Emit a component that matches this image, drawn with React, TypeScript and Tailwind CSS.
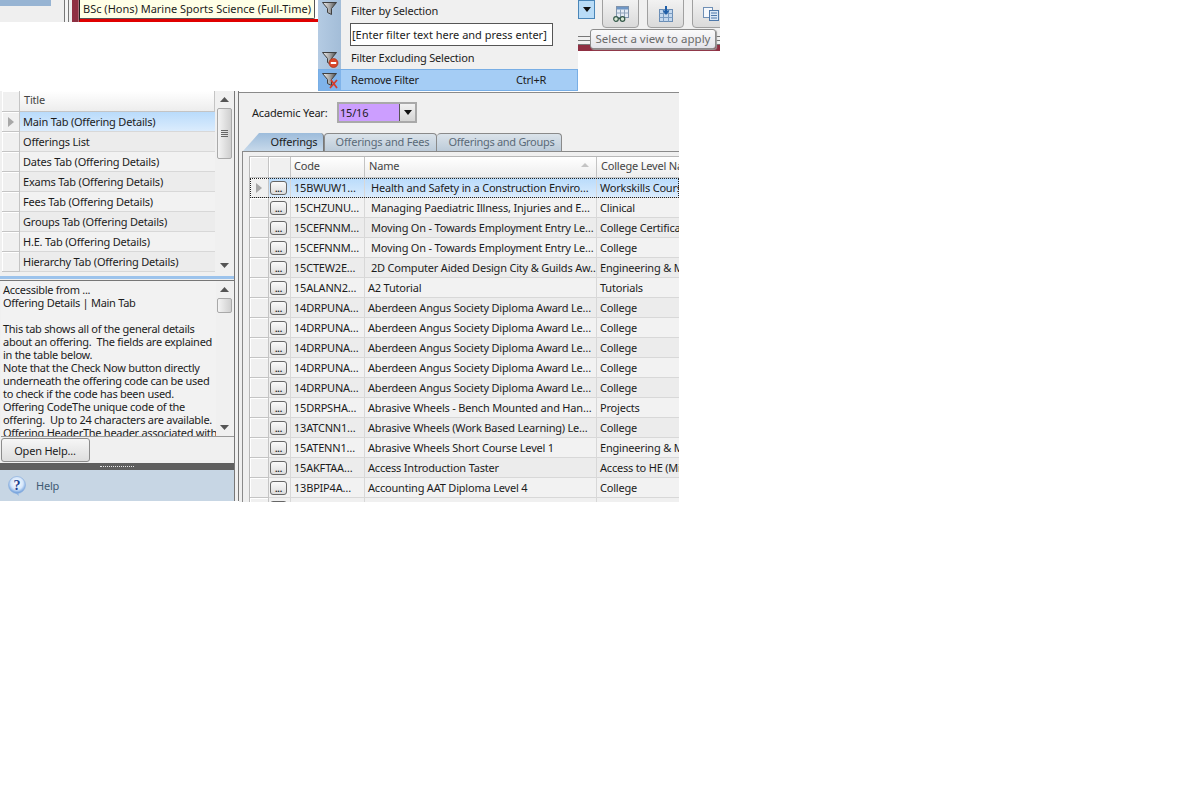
const listRows = [
  'Main Tab (Offering Details)',
  'Offerings List',
  'Dates Tab (Offering Details)',
  'Exams Tab (Offering Details)',
  'Fees Tab (Offering Details)',
  'Groups Tab (Offering Details)',
  'H.E. Tab (Offering Details)',
  'Hierarchy Tab (Offering Details)',
];

const helpLines = [
  'Accessible from ...',
  'Offering Details | Main Tab',
  '\u00a0',
  'This tab shows all of the general details',
  'about an offering.\u00a0 The fields are explained',
  'in the table below.',
  'Note that the Check Now button directly',
  'underneath the offering code can be used',
  'to check if the code has been used.',
  'Offering CodeThe unique code of the',
  'offering.\u00a0 Up to 24 characters are available.',
  'Offering HeaderThe header associated with',
];

const gridRows = [
  ['15BWUW1…', 'Health and Safety in a Construction Enviro…', 'Workskills Course'],
  ['15CHZUNU…', 'Managing Paediatric Illness, Injuries and E…', 'Clinical'],
  ['15CEFNNM…', 'Moving On - Towards Employment Entry Le…', 'College Certificate'],
  ['15CEFNNM…', 'Moving On - Towards Employment Entry Le…', 'College'],
  ['15CTEW2E…', '2D Computer Aided Design City & Guilds Aw…', 'Engineering & Manufacturing'],
  ['15ALANN2…', 'A2 Tutorial', 'Tutorials'],
  ['14DRPUNA…', 'Aberdeen Angus Society Diploma Award Le…', 'College'],
  ['14DRPUNA…', 'Aberdeen Angus Society Diploma Award Le…', 'College'],
  ['14DRPUNA…', 'Aberdeen Angus Society Diploma Award Le…', 'College'],
  ['14DRPUNA…', 'Aberdeen Angus Society Diploma Award Le…', 'College'],
  ['14DRPUNA…', 'Aberdeen Angus Society Diploma Award Le…', 'College'],
  ['15DRPSHA…', 'Abrasive Wheels - Bench Mounted and Han…', 'Projects'],
  ['13ATCNN1…', 'Abrasive Wheels (Work Based Learning) Le…', 'College'],
  ['15ATENN1…', 'Abrasive Wheels Short Course Level 1', 'Engineering & Manufacturing'],
  ['15AKFTAA…', 'Access Introduction Taster', 'Access to HE (Mixed)'],
  ['13BPIP4A…', 'Accounting  AAT Diploma Level 4', 'College'],
];

function Funnel({ id, mark }: { id: string; mark?: 'minus' | 'cross' }) {
  return (
    <svg width="18" height="18" viewBox="0 0 18 18">
      <defs>
        <linearGradient id={id} x1="0" y1="0" x2="1" y2="0">
          <stop offset="0" stopColor="#f4f4f4" />
          <stop offset="0.55" stopColor="#a0a0a0" />
          <stop offset="1" stopColor="#444444" />
        </linearGradient>
      </defs>
      <path d="M1.5 2.5h14l-5 6v6l-4-2v-4z" fill={`url(#${id})`} stroke="#3f3f3f" strokeWidth="1" />
      {mark === 'minus' && (
        <>
          <circle cx="12.5" cy="13" r="4.5" fill="#d9472a" stroke="#a83214" strokeWidth="0.7" />
          <rect x="9.8" y="12" width="5.4" height="2" fill="#ffffff" />
        </>
      )}
      {mark === 'cross' && <path d="M9 17l7-8M10 9l6 8" stroke="#d63a2a" strokeWidth="1.7" fill="none" />}
    </svg>
  );
}

function ToolButton({ children }: { children: React.ReactNode }) {
  return (
    <div className="w-[37px] h-[29px] -mt-px shrink-0 flex items-center justify-center rounded-b-[4px] border border-[#a0a0a0] bg-gradient-to-b from-[#f2f2f2] to-[#dadada]">
      {children}
    </div>
  );
}

function ScrollArrow({ up }: { up?: boolean }) {
  return (
    <div className="h-[17px] flex items-center justify-center">
      <svg width="9" height="5" viewBox="0 0 9 5">
        <path d={up ? 'M4.5 0L9 5H0z' : 'M4.5 5L0 0h9z'} fill="#555555" />
      </svg>
    </div>
  );
}

function ScrollBar({ thumbHeight, grip }: { thumbHeight: string; grip?: boolean }) {
  return (
    <div className="w-[17px] h-full flex flex-col bg-[#f0f0f0]">
      <ScrollArrow up />
      <div className="flex-1 min-h-0">
        <div className={`${thumbHeight} mx-px border border-[#a9a9a9] rounded-[2px] bg-gradient-to-r from-[#f4f4f4] to-[#cfcfcf] flex flex-col items-center justify-center gap-px`}>
          {grip && (
            <>
              <div className="w-[7px] h-px bg-[#666666]" />
              <div className="w-[7px] h-px bg-[#666666]" />
              <div className="w-[7px] h-px bg-[#666666]" />
              <div className="w-[7px] h-px bg-[#666666]" />
            </>
          )}
        </div>
      </div>
      <ScrollArrow />
    </div>
  );
}

function SelectorCell({ active }: { active?: boolean }) {
  return (
    <div className="h-full flex items-center justify-center border-r border-b border-[#c4c4c4] bg-[#f0f0f0] shadow-[inset_1px_1px_0_#ffffff]">
      {active && <div className="w-0 h-0 border-y-[5px] border-y-transparent border-l-[6px] border-l-[#a8a8a8]" />}
    </div>
  );
}

export default function App() {
  return (
    <div className="w-[1197px] h-[804px] bg-white overflow-hidden text-[11px] leading-none tracking-[-0.2px] text-[#1c1c1c] font-['Noto_Sans','Liberation_Sans',sans-serif]">
      {/* top strip: cut-off form, filter menu, toolbar */}
      <div className="flex h-[91px] items-start">
        <div className="relative w-[318px] h-[22px] flex">
          <div className="w-[64px] h-full bg-[#efefef]">
            <div className="w-[51px] h-[6px] bg-[#97b4d3]" />
          </div>
          <div className="w-[5px] h-full bg-[#f4f4f4] border-x border-[#777777]" />
          <div className="w-[3px] h-full bg-[#f0f0f0]" />
          <div className="w-[7px] h-full bg-[#8f2f42] border-r border-[#b06a78]" />
          <div className="flex-1 h-full bg-white border-l border-[#222222] border-b-[3px] border-b-[#e00000]" />
          <div className="absolute left-[80px] top-0 h-[19px] w-[235px] flex items-center pl-[3px] pb-[2px] bg-[#ffffe6] border-r border-b border-[#555555] rounded-br-[2px] tracking-normal whitespace-nowrap">
            BSc (Hons) Marine Sports Science (Full-Time)
          </div>
        </div>

        <div className="w-[260px] h-[91px] flex flex-col bg-[#f0f0f0]">
          <div className="h-[69px] flex">
            <div className="w-[23px] h-full bg-gradient-to-r from-[#b4cbe3] to-[#a3bdd8] flex flex-col items-center">
              <Funnel id="f1" />
              <div className="h-[32px]" />
              <Funnel id="f2" mark="minus" />
            </div>
            <div className="flex-1 pl-[10px]">
              <div className="h-[23px] flex items-center pb-[2px]">Filter by Selection</div>
              <div className="h-[23px] w-[203px] -ml-px flex items-center pl-[1px] bg-white border border-[#555555] tracking-normal whitespace-nowrap">
                [Enter filter text here and press enter]
              </div>
              <div className="h-[23px] flex items-center">Filter Excluding Selection</div>
            </div>
          </div>
          <div className="h-[22px] flex items-center bg-[#a5cdf5] border border-[#78aee5]">
            <div className="w-[22px] h-full flex items-center justify-center bg-[#7fb3ea]">
              <Funnel id="f3" mark="cross" />
            </div>
            <div className="w-[175px] pl-[10px] pb-[2px]">Remove Filter</div>
            <div className="pb-[2px]">Ctrl+R</div>
          </div>
        </div>

        <div className="relative w-[142px] h-[50px] bg-[#f0f0f0] overflow-visible">
          <div className="w-[142px] h-[29px] overflow-hidden flex items-start">
            <div className="w-[17px] h-[19px] shrink-0 flex items-center justify-center bg-[#b9dcf7] border border-[#4a86b8]">
              <div className="w-0 h-0 border-x-[4px] border-x-transparent border-t-[5px] border-t-[#111111]" />
            </div>
            <div className="ml-[7px] flex gap-[8px]">
              <ToolButton>
                <svg width="18" height="18" viewBox="0 0 18 18">
                  <rect x="4.5" y="1.5" width="12" height="11" fill="#e4ebf4" stroke="#7f93ab" />
                  <rect x="5" y="2" width="11" height="2.5" fill="#6f97c6" />
                  <path d="M4.5 8h12M8.5 4.5v8M12.5 4.5v8" stroke="#8fa3ba" />
                  <circle cx="4" cy="14" r="2.3" fill="#d9e8d6" stroke="#35594a" strokeWidth="1.2" />
                  <circle cx="10.5" cy="14" r="2.3" fill="#d9e8d6" stroke="#35594a" strokeWidth="1.2" />
                  <path d="M6.3 13.5h2" stroke="#35594a" strokeWidth="1.2" />
                </svg>
              </ToolButton>
              <ToolButton>
                <svg width="18" height="18" viewBox="0 0 18 18">
                  <rect x="2.5" y="4.5" width="13" height="12" fill="#c4d8ee" stroke="#6a8db5" />
                  <path d="M2.5 8.5h13M2.5 12.5h13M6.5 4.5v12M11.5 4.5v12" stroke="#7a9cc2" />
                  <path d="M9 1v6" stroke="#1f5ea8" strokeWidth="2" />
                  <path d="M5.5 5.5L9 10l3.5-4.5z" fill="#1f5ea8" />
                </svg>
              </ToolButton>
              <ToolButton>
                <svg width="18" height="18" viewBox="0 0 18 18">
                  <rect x="1.5" y="2.5" width="9" height="10" fill="#f5f8fc" stroke="#6f8fb5" />
                  <rect x="7.5" y="5.5" width="9" height="10" fill="#dbe8f6" stroke="#4f79aa" />
                  <path d="M9 8h6M9 10.5h6M9 13h6" stroke="#4f79aa" />
                </svg>
              </ToolButton>
            </div>
          </div>
          <div className="flex flex-col gap-[3px] pt-[7px]">
            <div className="h-px bg-[#777777]" />
            <div className="h-px bg-[#777777]" />
            <div className="h-px bg-[#777777]" />
          </div>
          <div className="h-[6px] bg-[#8f2f42]" />
          <div className="absolute left-[12px] top-[29px] h-[20px] w-[126px] flex items-center justify-center rounded-[3px] border border-[#8c8c8c] bg-gradient-to-b from-[#fafafa] to-[#e4e4ea] text-[11.5px] tracking-normal text-[#6b6b6b] whitespace-nowrap shadow-[1px_1px_1px_#999999]">
            Select a view to apply
          </div>
        </div>
      </div>

      {/* lower part: navigation pane and offerings */}
      <div className="flex h-[410px] w-[679px]">
        <div className="w-[235px] h-full flex flex-col bg-[#f0f0f0] border-r border-[#777777]">
          <div className="h-[183px] flex pl-[2px] pr-px">
            <div className="w-[214px] flex flex-col">
              <div className="h-[21px] flex">
                <div className="w-[18px]"><SelectorCell /></div>
                <div className="flex-1 flex items-center pl-[4px] pb-[3px] border-r border-b border-[#c4c4c4] bg-gradient-to-b from-white to-[#ededed] text-[#444444]">Title</div>
              </div>
              {listRows.map((t, i) => (
                <div key={t} className="h-[20px] flex">
                  <div className="w-[18px]"><SelectorCell active={i === 0} /></div>
                  <div className={`flex-1 flex items-center pl-[3px] border-b border-[#d8d8d8] ${i === 0 ? 'bg-gradient-to-b from-[#b9dbfb] to-[#dbecfd]' : i % 2 ? 'bg-[#ececec]' : 'bg-[#f2f2f2]'}`}>
                    {t}
                  </div>
                </div>
              ))}
            </div>
            <div className="ml-[1px] h-full">
              <ScrollBar thumbHeight="h-[51px]" grip />
            </div>
          </div>
          <div className="h-[5px] mt-[2px] border-t-[3px] border-[#9cc3ec] border-b border-b-[#777777]" />
          <div className="h-[156px] flex bg-[#f2f2f2] border-b border-[#999999] ml-[1px]">
            <div className="w-[215px] overflow-hidden pl-[2px] pt-[2px] leading-[13px] tracking-[-0.28px] whitespace-nowrap">
              {helpLines.map((l, i) => (
                <p key={i}>{l}</p>
              ))}
            </div>
            <ScrollBar thumbHeight="h-[15px]" />
          </div>
          <div className="h-[26px] pt-[1px] pl-px">
            <button className="w-[89px] h-[24px] pr-px rounded-[3px] border border-[#8c8c8c] bg-gradient-to-b from-[#f6f6f6] to-[#dedede]">Open Help...</button>
          </div>
          <div className="h-[7px] flex items-center justify-center bg-[#5f5f5f]">
            <div className="w-[34px] border-t border-dotted border-[#e8e8e8]" />
          </div>
          <div className="flex-1 flex items-center gap-[9px] pl-[7px] bg-[#c7d6e4] text-[#3f5a73]">
            <svg width="20" height="22" viewBox="0 0 20 22">
              <defs>
                <radialGradient id="helpBall" cx="0.5" cy="0.4" r="0.6">
                  <stop offset="0" stopColor="#ffffff" />
                  <stop offset="0.6" stopColor="#d5e6fa" />
                  <stop offset="1" stopColor="#5f93d6" />
                </radialGradient>
              </defs>
              <path d="M11 17l1 4-4.5-3.5z" fill="#8fb6e6" />
              <circle cx="10" cy="10" r="8.5" fill="url(#helpBall)" stroke="#8fb2de" strokeWidth="0.7" />
              <text x="10" y="15" textAnchor="middle" fontSize="14" fontWeight="700" fontFamily="'Liberation Serif', serif" fill="#1b3f8f">?</text>
            </svg>
            <span>Help</span>
          </div>
        </div>

        <div className="w-[4px] h-full bg-[#f0f0f0] border-r border-[#777777]" />

        <div className="flex-1 min-w-0 h-full flex flex-col bg-[#f0f0f0] border-t border-[#8a8a8a] mt-px overflow-hidden">
          <div className="h-[40px] shrink-0 flex items-center pl-[13px] pb-[2px]">
            <span className="w-[74px] whitespace-nowrap">Academic Year:</span>
            <div className="ml-[11px] w-[80px] h-[21px] flex border-2 border-[#a9a9a9]">
              <div className="flex-1 flex items-center pl-[1px] bg-[#cc9eff]">15/16</div>
              <div className="w-[16px] flex items-center justify-center bg-gradient-to-b from-[#f2f2f2] to-[#d5d5d5] border-l border-[#555555]">
                <div className="w-0 h-0 border-x-[4px] border-x-transparent border-t-[5px] border-t-[#111111]" />
              </div>
            </div>
          </div>
          <div className="h-[18px] shrink-0 flex items-end pl-[4px]">
            <div className="w-[81px] h-[18px] flex items-center justify-center pl-[22px] pb-[1px] rounded-tr-[4px] [clip-path:polygon(16px_0,100%_0,100%_100%,0_100%)] bg-gradient-to-b from-[#9dbcdb] to-[#c7d9ea] border-r border-[#777777]">Offerings</div>
            <div className="w-[113px] h-[18px] flex items-center justify-center pl-[4px] pb-[2px] rounded-t-[4px] bg-gradient-to-b from-[#dbe3ea] to-[#bccbd9] border border-b-0 border-[#8a8a8a] text-[#5a6a78]">Offerings and Fees</div>
            <div className="w-[125px] h-[18px] flex items-center justify-center pl-[5px] pb-[2px] rounded-t-[4px] tracking-[-0.3px] bg-gradient-to-b from-[#dbe3ea] to-[#bccbd9] border border-l-0 border-b-0 border-[#8a8a8a] text-[#5a6a78]">Offerings and Groups</div>
          </div>
          <div className="flex-1 min-h-0 ml-[3px] border-l border-t border-[#8a8a8a] pl-[6px] pt-[4px]">
            <div className="h-full overflow-hidden border-l border-t border-[#b8b8b8]">
              <div className="h-[21px] flex">
                <div className="w-[19px] shrink-0"><SelectorCell /></div>
                <div className="w-[22px] shrink-0"><SelectorCell /></div>
                <div className="w-[74px] shrink-0 flex items-center pl-[3px] pb-[4px] border-r border-b border-[#c4c4c4] bg-gradient-to-b from-white to-[#ededed] text-[#444444]">Code</div>
                <div className="w-[232px] shrink-0 flex items-center justify-between pl-[4px] pr-[7px] pb-[4px] border-r border-b border-[#c4c4c4] bg-gradient-to-b from-white to-[#ededed] text-[#444444]">
                  <span>Name</span>
                  <div className="w-0 h-0 border-x-[4px] border-x-transparent border-b-[4px] border-b-[#c4c4c4]" />
                </div>
                <div className="flex-1 flex items-center pl-[4px] pb-[4px] whitespace-nowrap overflow-hidden border-b border-[#c4c4c4] bg-gradient-to-b from-white to-[#ededed] text-[#444444]">College Level Name</div>
              </div>
              {gridRows.map((r, i) => (
                <div key={i} className={`h-[20px] flex whitespace-nowrap ${i === 0 ? 'bg-gradient-to-b from-[#b9dbfb] to-[#dbecfd] outline-1 outline-dotted outline-[#222222] -outline-offset-1' : i % 2 ? 'bg-[#f2f2f2]' : 'bg-[#ececec]'}`}>
                  <div className="w-[19px] shrink-0"><SelectorCell active={i === 0} /></div>
                  <div className="w-[22px] shrink-0 flex items-center justify-center pr-[2px] border-r border-b border-[#d8d8d8]">
                    <div className="w-[17px] h-[14px] shrink-0 flex items-end justify-center pb-[3px] rounded-[3px] border border-[#666666] bg-gradient-to-b from-[#fafafa] to-[#dcdcdc] text-[9px] leading-[4px] font-bold">...</div>
                  </div>
                  <div className="w-[74px] shrink-0 flex items-center pl-[3px] overflow-hidden border-r border-b border-[#d8d8d8]">{r[0]}</div>
                  <div className={`w-[232px] shrink-0 flex items-center overflow-hidden border-r border-b border-[#d8d8d8] ${i < 5 ? 'pl-[6px]' : 'pl-[3px]'}`}>{r[1]}</div>
                  <div className="flex-1 min-w-0 overflow-hidden flex items-center pl-[3px] border-b border-[#d8d8d8]">{r[2]}</div>
                </div>
              ))}
              <div className="h-[20px] flex">
                <div className="w-[19px] shrink-0"><SelectorCell /></div>
                <div className="w-[22px] shrink-0 flex justify-center pt-[3px] pr-[2px] border-r border-[#d8d8d8]">
                  <div className="w-[17px] h-[14px] rounded-[3px] border border-[#666666]" />
                </div>
                <div className="w-[74px] shrink-0 border-r border-[#d8d8d8]" />
                <div className="w-[232px] shrink-0 border-r border-[#d8d8d8]" />
              </div>
            </div>
          </div>
        </div>
      </div>
    </div>
  );
}
